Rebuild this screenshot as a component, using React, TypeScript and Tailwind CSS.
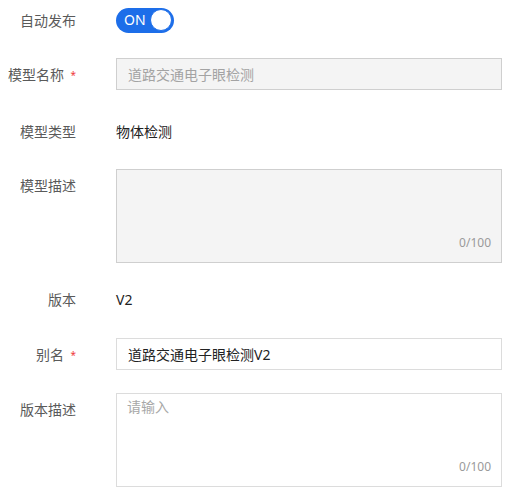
import { ReactNode } from "react";

// Form rows: label column is right aligned to x=76, controls start at x=116
function Row({
  label,
  required,
  top,
  children,
  className = "",
}: {
  label: string;
  required?: boolean;
  top?: boolean;
  children: ReactNode;
  className?: string;
}) {
  return (
    <div className={`flex ${top ? "items-start" : "items-center"} ${className}`}>
      <div className="w-[76px] h-[32px] flex items-center justify-end text-[14px] text-[#5a5a5a] shrink-0">
        <span>{label}</span>
        {required && (
          <span className="inline-block w-[12px] text-right text-[#ef3b3b] text-[10px] leading-none mt-[1px]">
            *
          </span>
        )}
      </div>
      <div className="ml-[40px] w-[386px]">{children}</div>
    </div>
  );
}

function Counter() {
  return (
    <span className="absolute right-[10px] bottom-[11px] text-[12px] leading-[16px] text-[#9a9a9a]">
      0/100
    </span>
  );
}

export default function App() {
  return (
    <div className="bg-white min-h-screen w-[515px] pt-[4px] font-['Noto_Sans','Noto_Sans_CJK_SC',sans-serif]">
      <Row label="自动发布">
        <div className="w-[58px] h-[25px] rounded-full bg-[#1d6ee9] flex items-center pl-[8px] pr-[2px]">
          <span className="text-white text-[14px] leading-none flex-1">ON</span>
          <span className="w-[22px] h-[22px] rounded-full bg-white border border-[#1d6ee9]" />
        </div>
      </Row>

      <Row label="模型名称" required className="mt-[22px]">
        <input
          readOnly
          disabled
          value="道路交通电子眼检测"
          className="w-full h-[32px] border border-[#cfcfcf] bg-[#f4f4f4] px-[11px] text-[14px] text-[#a3a3a3] outline-none"
        />
      </Row>

      <Row label="模型类型" className="mt-[25px]">
        <div className="h-[32px] flex items-center text-[14px] text-[#222]">物体检测</div>
      </Row>

      <Row label="模型描述" top className="mt-[22px]">
        <div className="relative h-[94px] border border-[#cfcfcf] bg-[#f4f4f4]">
          <Counter />
        </div>
      </Row>

      <Row label="版本" className="mt-[20px]">
        <div className="h-[32px] flex items-center text-[14px] text-[#222]">V2</div>
      </Row>

      <Row label="别名" required className="mt-[23px]">
        <input
          readOnly
          value="道路交通电子眼检测V2"
          className="w-full h-[32px] border border-[#dcdcdc] bg-white px-[11px] text-[14px] text-[#222] outline-none"
        />
      </Row>

      <Row label="版本描述" top className="mt-[23px]">
        <div className="relative h-[94px] border border-[#dcdcdc] bg-white">
          <textarea
            readOnly
            placeholder="请输入"
            className="w-full h-full resize-none px-[10px] py-[3px] text-[14px] leading-[20px] placeholder:text-[#a8a8a8] outline-none"
          />
          <Counter />
        </div>
      </Row>
    </div>
  );
}
